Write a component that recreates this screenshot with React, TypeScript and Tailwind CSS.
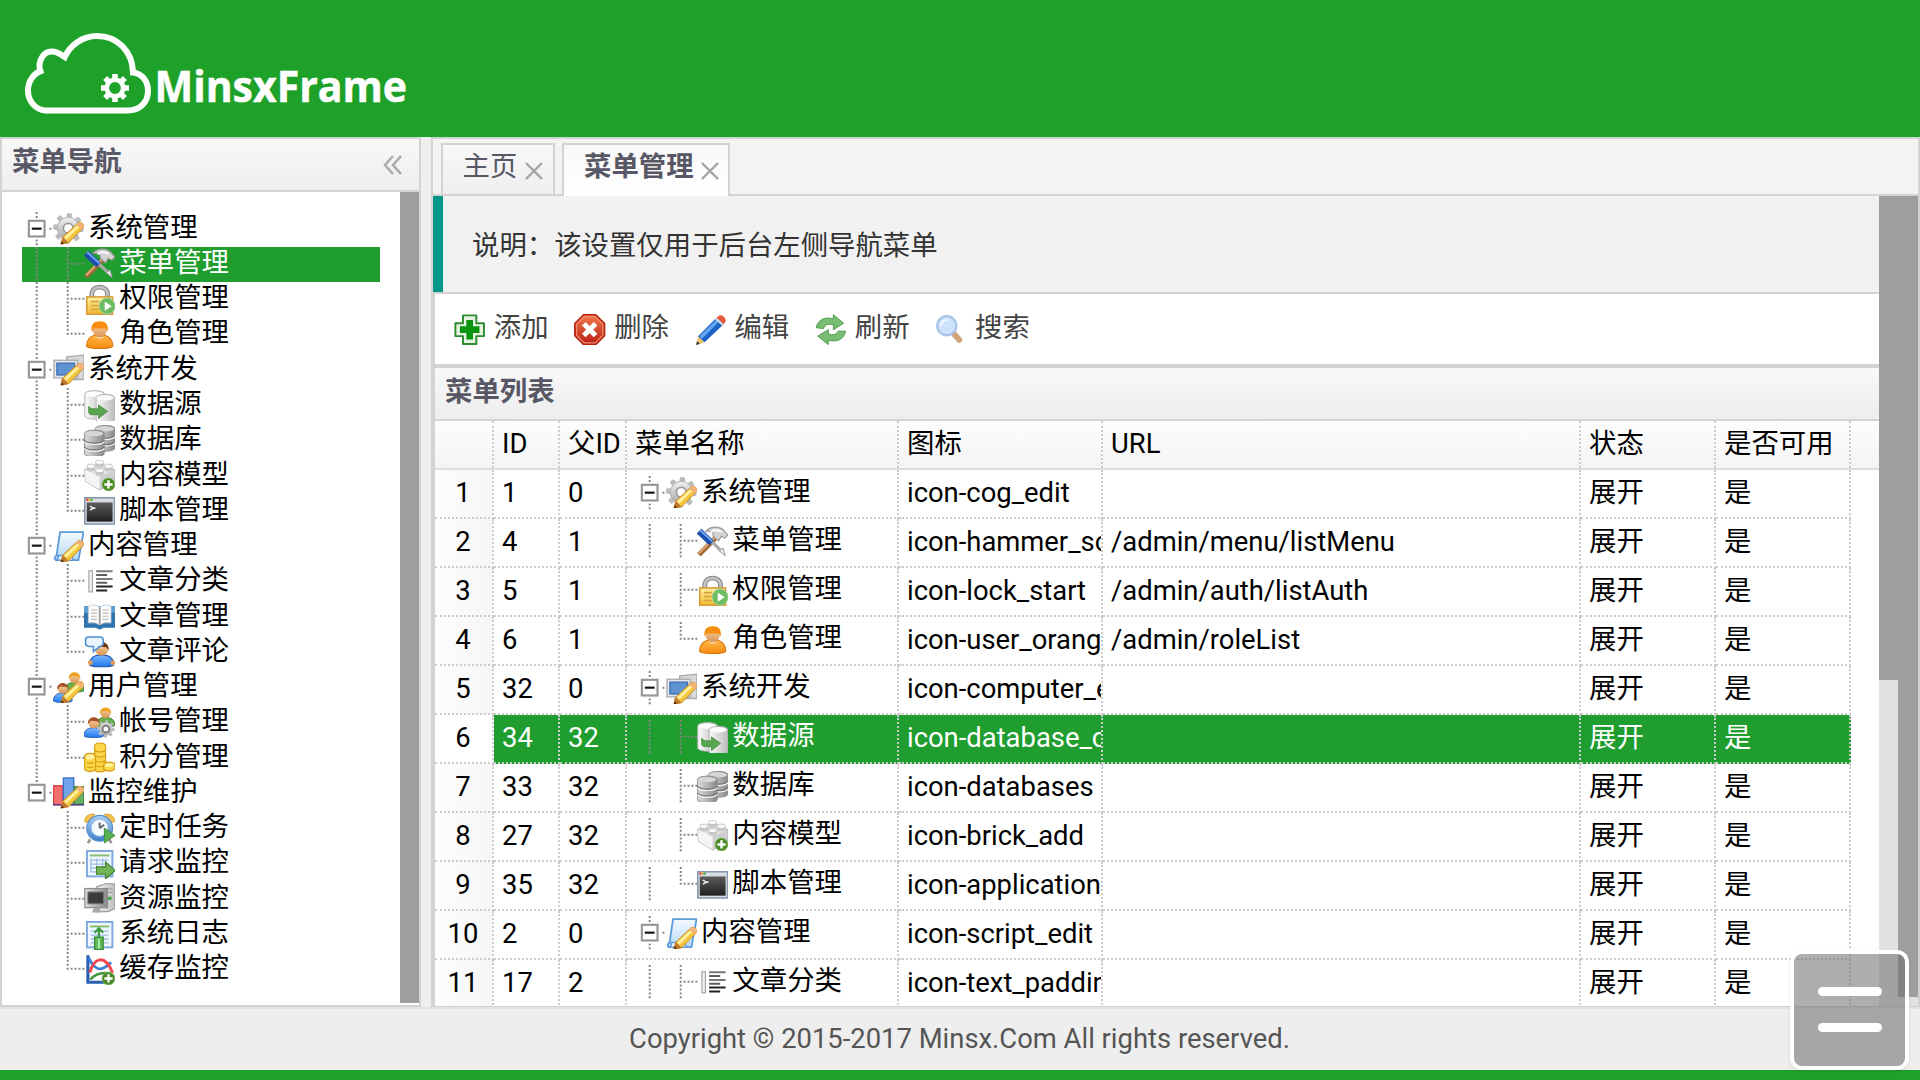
import React from "react";

type Row = { name: string; icon: string; level: 0 | 1; kind: "root" | "rootLast" | "mid" | "end"; line?: boolean };

const group = (name: string, icon: string, kids: [string, string][], last = false): Row[] => [
  { name, icon, level: 0, kind: last ? "rootLast" : "root" },
  ...kids.map(([n, i], k): Row => ({ name: n, icon: i, level: 1, kind: k === kids.length - 1 ? "end" : "mid", line: !last })),
];

const tree: Row[] = [
  ...group("系统管理", "cog", [["菜单管理", "hammer"], ["权限管理", "lock"], ["角色管理", "user"]]),
  ...group("系统开发", "computer", [["数据源", "dbgo"], ["数据库", "dbs"], ["内容模型", "brick"], ["脚本管理", "terminal"]]),
  ...group("内容管理", "script", [["文章分类", "padding"], ["文章管理", "book"], ["文章评论", "comment"]]),
  ...group("用户管理", "group", [["帐号管理", "groupgear"], ["积分管理", "coins"]]),
  ...group("监控维护", "chart", [["定时任务", "clock"], ["请求监控", "tablego"], ["资源监控", "server"], ["系统日志", "log"], ["缓存监控", "curve"]], true),
];

const grid: [number, number, string, string][] = [
  [1, 0, "icon-cog_edit", ""],
  [4, 1, "icon-hammer_screwdriver", "/admin/menu/listMenu"],
  [5, 1, "icon-lock_start", "/admin/auth/listAuth"],
  [6, 1, "icon-user_orange", "/admin/roleList"],
  [32, 0, "icon-computer_edit", ""],
  [34, 32, "icon-database_copy", ""],
  [33, 32, "icon-databases", ""],
  [27, 32, "icon-brick_add", ""],
  [35, 32, "icon-application_xp_terminal", ""],
  [2, 0, "icon-script_edit", ""],
  [17, 2, "icon-text_padding_left", ""],
];

function Defs() {
  const g = (id: string, a: string, b: string, diag = false) => (
    <linearGradient id={id} x1="0" y1="0" x2={diag ? "1" : "0"} y2={diag ? "0" : "1"}>
      <stop offset="0" stopColor={a} />
      <stop offset="1" stopColor={b} />
    </linearGradient>
  );
  return (
    <svg width="0" height="0" className="absolute">
      <defs>
        {g("gray", "#f2f2f2", "#a9a9a9")}
        {g("silver", "#fafafa", "#bdbdbd", true)}
        {g("metal", "#dcdcdc", "#8a8a8a", true)}
        {g("yellow", "#fff2a0", "#f0b830")}
        {g("orange", "#ffb84a", "#f78a0c")}
        {g("blue", "#a9d0f7", "#3d7fc8")}
        {g("pale", "#f4faff", "#b5d8f8")}
        {g("dark", "#5c5c5c", "#1f1f1f")}
        {g("green", "#a5dc8c", "#3f9a35")}
        {g("red", "#f27a50", "#b81c10")}
        {g("shirt", "#7db9ff", "#1f78ee")}
        {g("skin", "#fbd5a8", "#d99555")}
      </defs>
    </svg>
  );
}

const Pencil = () => (
  <g>
    <path d="M4 15.9 5 12.3 12.6 5.2C14 4 16.2 5.6 15.8 7.2L8 15.2Z" fill="#f4c63c" stroke="#c98a2b" strokeWidth=".5" />
    <path d="M5.7 12.4 13 5.7 14 6.6 6.7 13.7Z" fill="#fff0a0" />
    <path d="M12.6 5.2C14 4 16.2 5.6 15.8 7.2L14.7 8.3 11.7 6Z" fill="#f3b277" />
    <path d="M4 15.9 5 12.3 8 15.2Z" fill="#c07a30" />
    <path d="M4 15.9 4.4 14.4 5.7 15.6Z" fill="#5a2f0d" />
  </g>
);

const Gear = ({ x = 8, y = 8, r = 5.6 }: { x?: number; y?: number; r?: number }) => (
  <g transform={`translate(${x} ${y}) scale(${r / 5.6})`}>
    {[0, 45, 90, 135].map((a) => (
      <rect key={a} x="-1.4" y="-7.8" width="2.8" height="15.6" rx=".8" fill="#bdbdbd" transform={`rotate(${a + 5})`} />
    ))}
    <circle r="5.6" fill="url(#gray)" stroke="#b0b0b0" strokeWidth=".5" />
    <circle r="2.5" fill="#fff" stroke="#999" strokeWidth=".9" />
  </g>
);

const Person = ({ x, y, s, hair, body, stroke }: { x: number; y: number; s: number; hair: string; body: string; stroke: string }) => (
  <g transform={`translate(${x} ${y}) scale(${s})`}>
    <path d="M-6 5.2C-6 1.2-3 .2 0 .2S6 1.2 6 5.2C5 6.5-5 6.5-6 5.2Z" fill={body} stroke={stroke} strokeWidth=".6" />
    <circle cx="0" cy="-2.6" r="3.2" fill="url(#skin)" />
    <path d="M-3.6-1.9C-4-7.6 4-7.6 3.6-1.9L2.4-3.6-1.8-4Z" fill={hair} />
  </g>
);

const Cyl = ({ x, y, w = 10, h = 10, lines = false }: { x: number; y: number; w?: number; h?: number; lines?: boolean }) => {
  const shape = `M${x} ${y + 1.6}a${w / 2} 1.6 0 0 1 ${w} 0v${h}a${w / 2} 1.6 0 0 1 ${-w} 0Z`;
  return (
    <g fill="none">
      <path d={shape} fill={lines ? "url(#metal)" : "url(#silver)"} stroke={lines ? "#8d8d8d" : "#b4b4b4"} strokeWidth=".5" />
      <ellipse cx={x + w / 2} cy={y + 1.8} rx={w / 2 - 0.5} ry="1.3" fill={lines ? "#d6d6d6" : "#fcfcfc"} />
      {lines &&
        [0.33, 0.66].map((k) => (
          <g key={k} strokeWidth=".6">
            <path d={`M${x} ${y + 1.6 + h * k}a${w / 2} 1.6 0 0 0 ${w} 0`} stroke="#6d6d6d" />
            <path d={`M${x} ${y + 2.3 + h * k}a${w / 2} 1.6 0 0 0 ${w} 0`} stroke="#f2f2f2" />
          </g>
        ))}
    </g>
  );
};

const Plus = () => (
  <g>
    <circle cx="12.5" cy="12.5" r="3.3" fill="#4a8a24" stroke="#86b865" strokeWidth=".4" />
    <path d="M12.5 10.4v4.2M10.4 12.5h4.2" stroke="#fff" strokeWidth="1.2" />
  </g>
);

const Sheet = () => (
  <g>
    <rect x="1.5" y="1.5" width="13" height="13" fill="#eff6ff" stroke="#7fa9dc" strokeWidth="1" />
    <path d="M3 3.8h10" stroke="#86bf6d" strokeWidth="1" />
    <path d="M3.5 6.2h9M3.5 8.2h9M3.5 10.2h9M3.5 12.2h9" stroke="#9dbde4" strokeWidth=".7" />
  </g>
);

const art: Record<string, React.ReactNode> = {
  cog: (<><Gear x={7.8} y={7.8} /><Pencil /></>),
  hammer: (
    <>
      <path d="M1 14.7 9.5 6" stroke="#a36a35" strokeWidth="2.5" />
      <path d="M1 14 9 5.8" stroke="#e2b07a" strokeWidth=".9" />
      <path d="M4.5 2.6C7.5-.2 11.5.2 13.5 2L15.8 4.6 14.2 6.2 12.4 5.2 11 7.6 8.4 5.2 8 3Z" fill="#d4d4d4" stroke="#999" strokeWidth=".6" />
      <path d="M7 3.2C9 1.6 11 2 12.5 3" stroke="#fff" strokeWidth=".8" fill="none" />
      <path d="M7.8 8.2 12.6 13" stroke="#a9a9a9" strokeWidth="1.6" />
      <path d="M11.4 12.6 13.3 11.2 14.4 15.2Z" fill="#eee" stroke="#999" strokeWidth=".5" />
      <path d="M1.1 2.6 7.4 8.6" stroke="#1f4fae" strokeWidth="3.4" />
      <path d="M1.5 2 7.8 7.8" stroke="#6fa6f0" strokeWidth="1" />
    </>
  ),
  lock: (
    <>
      <path d="M4 8V5.2C4 .4 12 .4 12 5.2V8" fill="none" stroke="#8e8e8e" strokeWidth="2.5" />
      <path d="M4 8V5.2C4 .4 12 .4 12 5.2V8" fill="none" stroke="#c6c6c6" strokeWidth="1.2" />
      <rect x="1.4" y="6.6" width="13.2" height="8.8" fill="url(#yellow)" stroke="#d79a35" strokeWidth=".8" />
      <path d="M3.5 9h4M3.5 11h4M3.5 13h4" stroke="#d9a13c" strokeWidth=".8" />
      <circle cx="11.8" cy="11.3" r="4.1" fill="#6cbd62" stroke="#9ed494" strokeWidth=".5" />
      <path d="M10.6 8.9v4.8l3.5-2.4Z" fill="#fff" />
    </>
  ),
  user: (
    <>
      <path d="M1.3 13.8C1.3 11 3 9.200 5.4 8.200h5.200c2.400 1 4.100 2.800 4.100 5.600C13.500 15.400 2.500 15.400 1.300 13.800Z" fill="url(#orange)" stroke="#d9770f" strokeWidth=".6" />
      <ellipse cx="8" cy="5.4" rx="3.7" ry="3.9" fill="url(#skin)" />
      <path d="M3.9 6.4C3.4 3 4.600 1.200 8 1.100S12.600 3 12.100 6.400L11 4.800 5 4.800Z" fill="#f98d10" />
      <path d="M5.8 9.200Q8 11 10.200 9.200" fill="#fbd5a8" />
    </>
  ),
  computer: (
    <>
      <path d="M7 1.500 15.800.6V13H7Z" fill="#d8d8d8" stroke="#aaa" strokeWidth=".7" />
      <rect x=".5" y="3.2" width="12" height="9" fill="#e4e6ea" stroke="#a9adb5" strokeWidth=".7" />
      <rect x="2" y="4.7" width="9" height="6" fill="#5f92d2" stroke="#3e6eb4" strokeWidth=".7" />
      <path d="M4 13.5h5" stroke="#aaa" />
      <Pencil />
    </>
  ),
  dbgo: (
    <>
      <Cyl x={0.4} y={0.3} h={11.4} />
      <Cyl x={6.2} y={2.2} w={9.4} h={11.4} />
      <path d="M2.4 8.3v2.8C2.4 12 3 12.6 4 12.6h3.4v2L12 10.9 7.4 7.6v2H5C4 9.6 3 9.3 2.4 8.3Z" fill="#5aa552" stroke="#3d8b3a" strokeWidth=".4" />
    </>
  ),
  dbs: (<><Cyl x={5.8} y={0.2} h={10} lines /><Cyl x={0.3} y={2.6} h={10.5} lines /></>),
  brick: (
    <>
      <path d="M.4 5 8 1.6 15.6 5v6L8 15.2.8 10.8Z" fill="#e3e3e3" stroke="#b3b3b3" strokeWidth=".6" />
      <path d="M.4 5 8 8.6V15.2L.8 10.8Z" fill="#f5f5f5" />
      <path d="M8 8.6 15.6 5v6L8 15.2Z" fill="#cfcfcf" />
      {[[8, 1.6], [3.6, 3.6], [12.4, 3.6], [8, 5.8]].map(([a, b]) => (
        <g key={`${a}-${b}`}>
          <path d={`M${a - 2.1} ${b - 0.5}v1.8a2.1 1 0 0 0 4.2 0v-1.8Z`} fill="#c9c9c9" />
          <ellipse cx={a} cy={b - 0.4} rx="2.1" ry="1.1" fill="#fafafa" stroke="#b5b5b5" strokeWidth=".4" />
        </g>
      ))}
      <Plus />
    </>
  ),
  terminal: (
    <>
      <rect x=".4" y="1.4" width="15.2" height="13.4" fill="#d9dde6" stroke="#8796ae" strokeWidth=".8" />
      <path d="M1.2 2.4h1" stroke="#e33" strokeWidth="1.2" /><path d="M2.3 2.4h1" stroke="#e9a51e" strokeWidth="1.2" /><path d="M3.4 2.4h1" stroke="#3db02e" strokeWidth="1.2" />
      <rect x="1.4" y="3.8" width="13.2" height="9.8" fill="url(#dark)" />
      <path d="M3 5.7 4.8 6.7 3 7.7M4.6 6.7h1.2" stroke="#eee" strokeWidth=".8" fill="none" />
    </>
  ),
  script: (
    <>
      <path d="M3.6.6H15.6L13 14.9H1.6C.4 14.4.8 12.8 1.8 12.6Z" fill="url(#pale)" stroke="#5b9ad8" strokeWidth=".9" />
      <path d="M1.2 14.8C2.8 14.6 3 13.3 2.4 12.5H9.6L10.4 15Z" fill="#e8f3ff" stroke="#5b9ad8" strokeWidth=".7" />
      <Pencil />
    </>
  ),
  padding: (
    <>
      <rect x="2.5" y="2.4" width="1.8" height="10.8" fill="#f0f0f0" stroke="#a5a5a5" strokeWidth=".6" />
      <path d="M6.2 2.7h8.4M6.2 6.6h8.4" stroke="#787878" strokeWidth="1" />
      <path d="M6.2 4.6h5.6M6.2 8.5h5.6" stroke="#5c5c5c" strokeWidth="1" />
      <path d="M6.2 10.5h8.4M6.2 12.5h5.6" stroke="#222" strokeWidth="1" />
    </>
  ),
  book: (
    <>
      <path d="M0 2.6H16V13.6H9.8Q8 15.4 6.2 13.6H0Z" fill="#2f74ae" />
      <path d="M0 2.6H16V6H0Z" fill="#5f9fd0" />
      <path d="M2.2 2.6Q5.6 1.2 8 3.2 10.4 1.2 13.8 2.6V11.2Q10.4 10.6 8 12.2 5.6 10.6 2.2 11.2Z" fill="#fbfbfb" stroke="#b9c7d4" strokeWidth=".4" />
      <path d="M8 3.2V12" stroke="#999" strokeWidth=".9" />
      <path d="M3.6 4.6h3M3.6 6.2h3M3.6 7.8h3M3.6 9.4h3M9.4 4.6h3M9.4 6.2h3M9.4 7.8h3M9.4 9.4h3" stroke="#b9b9b9" strokeWidth=".6" />
    </>
  ),
  comment: (
    <>
      <Person x={9} y={9.4} s={1.02} hair="#6b3410" body="url(#shirt)" stroke="#2259b5" />
      <circle cx="3.2" cy="13.6" r="1.2" fill="#e39a55" /><circle cx="14.8" cy="13.6" r="1.2" fill="#e39a55" />
      <path d="M.8 2Q.8.5 2.4.5H8.2Q9.8.5 9.8 2V3.6Q9.8 5.2 8 5.4L4.8 8V5.4H2.4Q.8 5.2.8 3.6Z" fill="#eaf4ff" stroke="#4f8ed0" strokeWidth=".8" />
    </>
  ),
  group: (
    <>
      <Person x={11} y={5.2} s={0.82} hair="#f0a01c" body="#69b04f" stroke="#3f8130" />
      <Person x={5} y={10.6} s={0.8} hair="#a4532a" body="url(#shirt)" stroke="#2a62b8" />
      <Pencil />
    </>
  ),
  groupgear: (
    <>
      <Person x={11} y={5.2} s={0.8} hair="#f0a01c" body="#69b04f" stroke="#3f8130" />
      <Person x={5} y={10.4} s={0.84} hair="#a4532a" body="url(#shirt)" stroke="#2a62b8" />
      <g><Gear x={11.2} y={11.2} r={3.2} /><circle cx="11.2" cy="11.2" r="1.9" fill="none" stroke="#777" strokeWidth=".7" /></g>
    </>
  ),
  coins: (
    <g stroke="#d79f12" strokeWidth=".6" fill="#fbd54a">
      <path d="M5.4 2.2Q5.4.5 8.2.5T11 2.2V14.5Q8 16 5.4 14.5Z" />
      <path d="M5.6 4.4Q8.2 5.8 10.8 4.4M5.6 7Q8.2 8.4 10.8 7M5.6 9.6Q8.2 11 10.8 9.6M5.6 12Q8.2 13.4 10.8 12" fill="none" />
      <path d="M.3 7.4Q.3 5.8 3.1 5.8T5.9 7.4V14Q3 16.2.3 14Z" />
      <ellipse cx="3.1" cy="7.6" rx="2.2" ry="1.3" fill="#fff1a0" stroke="none" />
      <path d="M1.5 10.4Q3 11.4 4.8 10.4M1.5 12.6Q3 13.6 4.8 12.6" fill="none" />
      <path d="M10 11.6Q10 10.3 12.9 10.3T15.8 11.6V13.8Q13 16 10 13.8Z" />
      <ellipse cx="12.9" cy="11.8" rx="2.2" ry="1" fill="#fff1a0" stroke="none" />
    </g>
  ),
  chart: (
    <>
      <rect x=".2" y="4.5" width="4.8" height="9.6" fill="#f47070" stroke="#d83a3a" strokeWidth=".7" />
      <rect x="5.3" y=".5" width="5.3" height="13.6" fill="#6fa4ea" stroke="#3c73c8" strokeWidth=".7" />
      <rect x="10.9" y="5" width="4.8" height="9" fill="#66b064" stroke="#3c8a3d" strokeWidth=".7" />
      <path d="M0 14.2H16" stroke="#4a3a8a" strokeWidth=".7" />
      <Pencil />
    </>
  ),
  clock: (
    <>
      <path d="M.4 4.4C.4 1 3 .3 5.6.7L1.2 4.9ZM15.6 4.4C15.6 1 13 .3 10.4.7L14.8 4.9Z" fill="#f5c24c" stroke="#dba02a" strokeWidth=".5" />
      <path d="M3.2 13.4 2 15.4M12.8 13.4 14 15.4" stroke="#999" strokeWidth="1.4" />
      <circle cx="8" cy="7.8" r="6.6" fill="url(#blue)" stroke="#5e92c9" strokeWidth=".6" />
      <circle cx="8" cy="7.6" r="4.3" fill="#f6fbff" stroke="#a3c4e4" strokeWidth=".5" />
      <path d="M8 7.8V4.9M8 7.8 10.3 6" stroke="#666" strokeWidth="1" />
      <path d="M10.4 7.7v7.6L15.8 11.5Z" fill="#5db155" stroke="#3f9039" strokeWidth=".5" />
    </>
  ),
  tablego: (
    <>
      <Sheet />
      <path d="M3.5 5.4v7M6.5 5.4v7M9.5 5.4v7" stroke="#9dbde4" strokeWidth=".6" />
      <path d="M6.4 9.6H11V7.2L16 11.5 11 15.8V13.4H6.4Z" fill="#72b556" stroke="#45852f" strokeWidth=".6" />
    </>
  ),
  server: (
    <>
      <path d="M6.5 2 11 .4H15.8V13L12.5 14.6H6.5Z" fill="url(#silver)" stroke="#999" strokeWidth=".6" />
      <path d="M12 3h2.6M12 4.8h2.6" stroke="#999" strokeWidth=".5" />
      <rect x="12" y="7" width="2" height="1.6" fill="#38a838" />
      <rect x=".4" y="2.8" width="11.6" height="9.8" fill="url(#metal)" stroke="#8d8d8d" strokeWidth=".6" />
      <rect x="2" y="4.6" width="8" height="6" fill="#3b3b3b" stroke="#777" strokeWidth=".5" />
      <path d="M5 12.8h3l1 2.2H4Z" fill="#aaa" />
    </>
  ),
  log: (
    <>
      <Sheet />
      <rect x="5.4" y="9.2" width="4.4" height="6.4" fill="#5fba58" stroke="#2f8a30" strokeWidth=".6" />
      <path d="M7.6 10V5.4M5.4 7 7.6 4.7 9.8 7" stroke="#3a963c" strokeWidth="1.1" fill="none" />
      <path d="M7.6 10v5.2" stroke="#b5e5ae" strokeWidth="1" />
    </>
  ),
  curve: (
    <>
      <path d="M2 .6V14.4H12" stroke="#2860b0" strokeWidth="1.6" fill="none" />
      <path d="M2.4 2C5 7.6 8.5 10 13.8 4.2" stroke="#3b7edc" strokeWidth="1.4" fill="none" />
      <path d="M3 9.5C5 2 10.6-.4 14.6 9.6" stroke="#f0474c" strokeWidth="1.5" fill="none" />
      <path d="M3.2 13C6 9.8 9 9 13.6 10" stroke="#3f9440" strokeWidth="1.3" fill="none" />
      <Plus />
    </>
  ),
  add: (
    <>
      <path d="M4.6 0.7h6.8v4h3.9v6.6h-3.9v4H4.6v-4H.7V4.7h3.9Z" fill="#e5f3df" stroke="#2f8c33" strokeWidth="1" strokeLinejoin="round" />
      <path d="M8 3v10M3 8h10" stroke="#0b9410" strokeWidth="3.4" />
    </>
  ),
  remove: (
    <>
      <path d="M4.9.4h6.2l4.5 4.5v6.2l-4.5 4.5H4.9L.4 11.1V4.9Z" fill="url(#red)" stroke="#b6230f" strokeWidth=".8" />
      <path d="M5.2 1.3h5.6l3.9 3.9v5.6l-3.9 3.9H5.2L1.3 10.8V5.2Z" fill="none" stroke="#ef8d70" strokeWidth=".6" />
      <path d="M5 5l6 6M11 5l-6 6" stroke="#fff" strokeWidth="2.6" />
    </>
  ),
  edit: (
    <>
      <path d="M.6 15.8 1.6 11.3 4.9 14.4Z" fill="#eec268" />
      <path d="M.6 15.8 1 13.9 2.5 15.2Z" fill="#333" />
      <path d="M1.6 11.3 11 1.9 14.6 5.2 4.9 14.4Z" fill="#1b63c8" />
      <path d="M2.4 11.4 11.3 2.5 12.6 3.6 3.6 12.6Z" fill="#63a7f2" />
      <path d="M11 1.9 12.4.8C14 .2 16 2.2 15.6 3.8L14.6 5.2Z" fill="#e8583c" />
      <path d="M10.2 2.7 11 1.9 14.6 5.2 13.8 6Z" fill="#cfd9e6" />
    </>
  ),
  reload: (
    <g fill="#79bd72" stroke="#4e9c4b" strokeWidth=".5">
      <path d="M.6 7C1.4 3 5 1.2 9.4 2.5V.4L14.6 4.7 9.4 8V5.6C6.6 4.6 5 5.6 4.4 7.4Z" />
      <path d="M15.6 8.8C14.8 13 11 14.6 6.8 13.3V15.6L1.4 11.3 6.8 8V10.2C9.4 11 11 10.4 11.8 8.8Z" />
    </g>
  ),
  search: (
    <>
      <path d="M9.4 9.8 12.4 13.2" stroke="#d2a679" strokeWidth="3" strokeLinecap="round" />
      <circle cx="6" cy="6" r="4.9" fill="#cde3fb" stroke="#a9c4ea" strokeWidth="1.1" />
      <path d="M3 6.2A3.2 3.2 0 0 1 6.4 3" stroke="#f3f9ff" strokeWidth="1" fill="none" />
    </>
  ),
};

const Icon = ({ name }: { name: string }) => (
  <svg viewBox="0 0 16 16" className="h-[31.35px] w-[31.35px] shrink-0">{art[name]}</svg>
);

/** One indent cell of the tree: dotted connector lines and the collapse box. */
function Cell({ kind }: { kind: "blank" | "line" | Row["kind"] }) {
  const root = kind === "root" || kind === "rootLast";
  return (
    <svg viewBox="0 0 16 18" className="h-[35.27px] w-[31.35px] shrink-0">
      <g stroke="#858585" strokeWidth="1" strokeDasharray="1 1" fill="none">
        {(kind === "line" || kind === "mid") && <path d="M7.5 0V18" />}
        {kind === "end" && <path d="M7.5 0V9" />}
        {(kind === "mid" || kind === "end") && <path d="M9 8.5H16" />}
        {root && <path d="M7.5 0V4M14 8.5H16" />}
        {kind === "root" && <path d="M7.5 14V18" />}
      </g>
      {root && (
        <>
          <rect x="3.5" y="4.5" width="8" height="8" fill="#fff" stroke="#969696" strokeWidth="1.1" />
          <path d="M5 8.500H10" stroke="#111" strokeWidth="1.1" />
        </>
      )}
    </svg>
  );
}

function Node({ row }: { row: Row }) {
  return (
    <div className="flex h-[35.27px] items-start whitespace-nowrap">
      {row.level === 1 && <Cell kind={row.line ? "line" : "blank"} />}
      <Cell kind={row.kind} />
      <div className="-ml-[0.7px] flex pt-[1.500px]"><Icon name={row.icon} /></div>
      <span className="pl-[4px] leading-[33px]">{row.name}</span>
    </div>
  );
}

function Logo() {
  return (
    <svg width="400" height="100" viewBox="20 25 400 100" className="block">
      <path d="M45 110.5C34 109 28 100 28 90.5C28 81 34 73.5 40.5 71.2C37.5 63 42 51.5 52 51.5C57.5 51.5 61 54.5 64.8 57C70 45.5 82 36 97 36C117 36 132.5 51 133 72.5C142 73.5 148 81 148 91C148 102 140 110.5 128 110.5Z" fill="none" stroke="#fff" strokeWidth="6" />
      <g transform="translate(115 88)" fill="none" stroke="#fff">
        <circle r="8.2" strokeWidth="4.6" />
        {[0, 45, 90, 135, 180, 225, 270, 315].map((a) => (
          <path key={a} d="M0 -9.5V-14" strokeWidth="5.6" transform={`rotate(${a})`} />
        ))}
      </g>
      <text x="154.5" y="101.5" fill="#fff" stroke="#fff" strokeWidth=".5" fontFamily="Open Sans, Noto Sans, sans-serif" fontWeight="700" fontSize="42.500" textLength="252.500" lengthAdjust="spacingAndGlyphs">MinsxFrame</text>
    </svg>
  );
}

const Close = () => (
  <svg width="18" height="18" viewBox="0 0 18 18" className="mt-[17px] shrink-0"><path d="M1 1 17 17M17 1 1 17" stroke="#a3a3a3" strokeWidth="2.4" /></svg>
);

const cols = "grid grid-cols-[59px_66px_67px_272px_204px_478px_135px_135px]";
const cell = "overflow-hidden whitespace-nowrap border-r-2 border-dotted border-[#ccc] pl-[8px]";

export default function App() {
  return (
    <div className="relative flex h-[1080px] w-[1920px] flex-col overflow-hidden bg-[#1ea129] font-['Roboto','Noto_Sans_CJK_SC',sans-serif] text-[27.4px] text-black">
      <Defs />
      <header className="h-[137px] shrink-0 pl-[20px] pt-[25px]"><Logo /></header>

      <main className="flex h-[870px] shrink-0 bg-[#eee]">
        <aside className="flex w-[421px] shrink-0 flex-col border-2 border-[#d3d3d3] bg-white">
          <div className="flex h-[53px] shrink-0 items-start justify-between border-b-2 border-[#d3d3d3] bg-linear-to-b from-[#f8f8f8] to-[#eee] pl-[10px] pr-[17px] font-bold text-[#575765]">
            <span className="leading-[47px]">菜单导航</span>
            <svg width="19" height="20" viewBox="0 0 19 20" className="mt-[16px]" fill="none" stroke="#aaa" strokeWidth="2.6"><path d="M10 1 2 10 10 19M18 1 10 10 18 19" /></svg>
          </div>
          <div className="flex min-h-0 grow">
            <div className="grow pl-[20px] pr-[20px] pt-[19.7px]">
              {tree.map((r, i) => (
                <div key={i} className={i === 1 ? "bg-[#1f9d2f] text-white" : ""}><Node row={r} /></div>
              ))}
            </div>
            <div className="h-[811px] w-[19px] shrink-0 bg-[#9e9e9e]" />
          </div>
        </aside>

        <div className="w-[10px] shrink-0" />

        <section className="flex w-[1489px] flex-col border-2 border-b border-[#d3d3d3] bg-white">
          <div className="flex h-[57px] shrink-0 items-end border-b-2 border-[#d3d3d3] bg-[#f3f3f3] pl-[7.500px] text-[#575765]">
            <div className="flex h-[51px] w-[114px] items-start border-x-2 border-t-2 border-[#d3d3d3] bg-linear-to-b from-[#f8f8f8] to-[#eee] pl-[20px]">
              <span className="w-[62px] leading-[45px]">主页</span><Close />
            </div>
            <div className="z-10 -mb-[2px] ml-[7.500px] flex h-[53px] w-[168px] items-start border-x-2 border-t-2 border-[#d3d3d3] bg-linear-to-b from-[#f8f8f8] to-white pl-[20px] font-bold">
              <span className="w-[117px] leading-[45px]">菜单管理</span><Close />
            </div>
          </div>
          <div className="flex min-h-0 grow">
            <div className="flex w-[1446px] shrink-0 flex-col">
              <div className="h-[96px] shrink-0 border-l-[10px] border-[#009688] bg-[#f1f1f1] pl-[29px] leading-[100px] text-[#333]">说明：该设置仅用于后台左侧导航菜单</div>
              <div className="flex min-h-0 grow flex-col border-l-2 border-t-2 border-[#d3d3d3]">
                <div className="flex h-[70px] shrink-0 pl-[19px] pt-[19.500px] text-[#444]">
                  {[["add", "添加"], ["remove", "删除"], ["edit", "编辑"], ["reload", "刷新"], ["search", "搜索"]].map(([i, t]) => (
                    <div key={i} className="flex w-[120.3px] shrink-0"><Icon name={i} /><span className="pl-[8.500px] leading-[29px]">{t}</span></div>
                  ))}
                </div>
                <div className="h-[57px] shrink-0 border-b-2 border-t-4 border-[#d3d3d3] bg-linear-to-b from-[#f8f8f8] to-[#ededed] pl-[10px] font-bold leading-[49px] text-[#575765]">菜单列表</div>
                <div className="h-[49px] shrink-0 border-b-2 border-[#ddd] bg-linear-to-b from-[#fdfdfd] to-[#f4f4f4]">
                  <div className={`${cols} h-[47px] leading-[46px]`}>
                    {["", "ID", "父ID", "菜单名称", "图标", "URL", "状态", "是否可用"].map((h, i) => <div key={i} className={cell}>{h}</div>)}
                  </div>
                </div>
                <div className="min-h-0 grow overflow-hidden">
                  {grid.map((g, i) => {
                    const sel = i === 5;
                    return (
                      <div key={i} className={`${cols} h-[48.97px] w-[1416px] leading-[46px] ${sel ? "bg-[#1f9d2f] text-white" : ""} [&>div]:border-b-2`}>
                        <div className={`overflow-hidden border-b-2 border-r-2 border-dotted border-[#ccc] bg-linear-to-r pr-px text-center text-black ${sel ? "from-white to-white" : "from-[#fdfdfd] to-[#f6f6f6]"}`}>{i + 1}</div>
                        <div className={cell}>{g[0]}</div>
                        <div className={cell}>{g[1]}</div>
                        <div className="overflow-hidden border-r-2 border-dotted border-[#ccc] pl-[8px] pt-[5.5px]"><Node row={tree[i]} /></div>
                        <div className={cell}>{g[2]}</div>
                        <div className={cell}>{g[3]}</div>
                        <div className={cell}>展开</div>
                        <div className={cell}>是</div>
                      </div>
                    );
                  })}
                </div>
              </div>
            </div>
            <div className="w-[19px] shrink-0 bg-[#e2e2e2]"><div className="h-[484px] bg-[#9e9e9e]" /></div>
            <div className="w-[20px] shrink-0 bg-[#e2e2e2]"><div className="h-[801px] bg-[#9e9e9e]" /></div>
          </div>
        </section>
      </main>

      <footer className="h-[63px] shrink-0 border-t-2 border-[#e2e2e2] bg-[#eee] pr-px text-center leading-[61px] text-[#555]">Copyright © 2015-2017 Minsx.Com All rights reserved.</footer>

      <div className="absolute left-[1790px] top-[950px] z-20 flex h-[120px] w-[119px] flex-col items-center rounded-[12px] border-[4px] border-white bg-[#6b6b6b]/55 pt-[33px] shadow-sm">
        <div className="h-[9px] w-[64px] rounded-full bg-white" />
        <div className="mt-[27px] h-[9px] w-[64px] rounded-full bg-white" />
      </div>
    </div>
  );
}
